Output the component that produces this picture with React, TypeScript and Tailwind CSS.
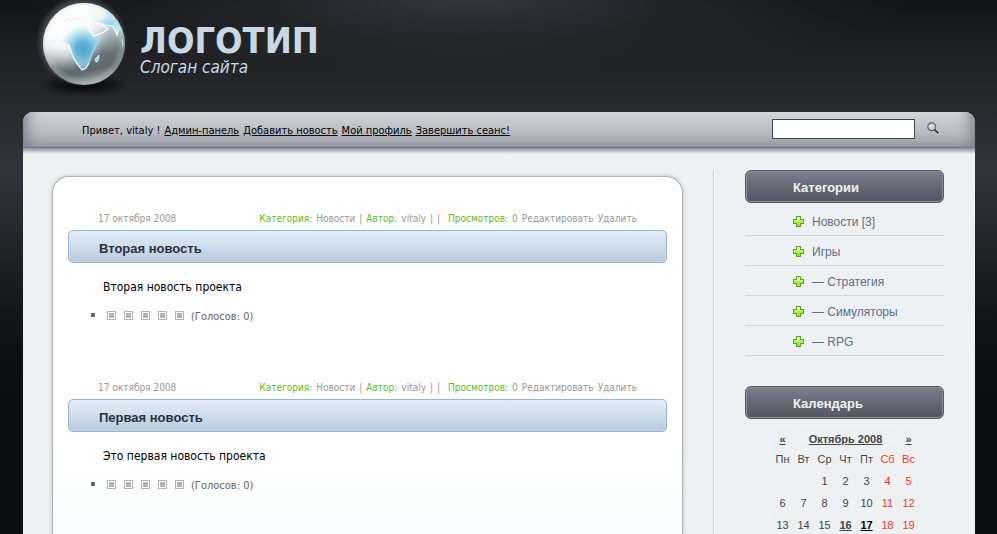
import React from "react";

const categories = ["Новости [3]", "Игры", "— Стратегия", "— Симуляторы", "— RPG"];

const news = [
  { title: "Вторая новость", text: "Вторая новость проекта" },
  { title: "Первая новость", text: "Это первая новость проекта" },
];

const weekdays = ["Пн", "Вт", "Ср", "Чт", "Пт", "Сб", "Вс"];
const weeks = [
  ["", "", "1", "2", "3", "4", "5"],
  ["6", "7", "8", "9", "10", "11", "12"],
  ["13", "14", "15", "16", "17", "18", "19"],
];

const tahoma = "font-['DejaVu_Sans_Condensed','DejaVu_Sans',sans-serif]";

function Globe() {
  return (
    <svg className="-mr-1 h-[98px] w-[108px] shrink-0" viewBox="0 0 108 98" aria-hidden="true">
      <defs>
        <linearGradient id="ball" x1="0.3" y1="0" x2="0.55" y2="1">
          <stop offset="0" stopColor="#ffffff" />
          <stop offset="0.3" stopColor="#e3ebef" />
          <stop offset="0.5" stopColor="#a3b0b7" />
          <stop offset="0.7" stopColor="#667177" />
          <stop offset="0.84" stopColor="#5f6a6f" />
          <stop offset="1" stopColor="#9aa3a6" />
        </linearGradient>
        <radialGradient id="shine" cx="0.26" cy="0.28" r="0.55">
          <stop offset="0" stopColor="#fff" />
          <stop offset="0.5" stopColor="#fff" stopOpacity="0.85" />
          <stop offset="1" stopColor="#fff" stopOpacity="0" />
        </radialGradient>
        <radialGradient id="rim" cx="0.5" cy="0.5" r="0.5">
          <stop offset="0.8" stopColor="#fff" stopOpacity="0" />
          <stop offset="0.95" stopColor="#e3e9eb" stopOpacity="0.25" />
          <stop offset="1" stopColor="#a6afb3" stopOpacity="0.3" />
        </radialGradient>
        <radialGradient id="halo">
          <stop offset="0.85" stopColor="#a5b0b6" stopOpacity="0.3" />
          <stop offset="1" stopColor="#8c979e" stopOpacity="0" />
        </radialGradient>
        <radialGradient id="drop">
          <stop offset="0" stopColor="#000" stopOpacity="0.9" />
          <stop offset="0.6" stopColor="#000" stopOpacity="0.4" />
          <stop offset="1" stopColor="#000" stopOpacity="0" />
        </radialGradient>
        <radialGradient id="land" gradientUnits="userSpaceOnUse" cx="47" cy="49" r="26">
          <stop offset="0" stopColor="#4da3cb" />
          <stop offset="0.3" stopColor="#66b4d7" />
          <stop offset="0.65" stopColor="#a5dbee" stopOpacity="0.7" />
          <stop offset="1" stopColor="#ffffff" stopOpacity="0" />
        </radialGradient>
        <linearGradient id="asia" x1="0" y1="0" x2="1" y2="1">
          <stop offset="0" stopColor="#e5f7fc" stopOpacity="0.1" />
          <stop offset="0.6" stopColor="#8fd2ea" />
          <stop offset="1" stopColor="#c5f4ff" />
        </linearGradient>
      </defs>
      <ellipse cx="48" cy="85" rx="46" ry="12" fill="url(#drop)" />
      <circle cx="46" cy="41" r="46" fill="url(#halo)" />
      <circle cx="48" cy="44" r="41" fill="url(#ball)" />
      <circle cx="48" cy="44" r="41" fill="url(#shine)" />
      <path d="M58 23 L66 22 L70 25 L77 26 L81 35 L83 28 L86 33 Q82 17 69 10 Q72 18 66 20Z" fill="url(#asia)" />
      <path
        d="M20 43 L24 33 L33 26 L49 24 L53 30 L58 36 L63 38 L62 43 L57 51 L55 57 L53 63 L50 68 L46 70 L42 65 L38 59 L35 51 L33 45 L27 43 L23 46Z"
        fill="url(#land)"
      />
      <path d="M20 42 L22 45 L27 43 L33 45 L35 51 L38 59 L42 65 L46 70 L50 68 L53 63" fill="none" stroke="#f0fdff" strokeWidth="1.2" />
      <path d="M53 63 L55 57 L57 51 L62 43 L63 38 L58 36" fill="none" stroke="#8fe0f7" strokeWidth="1.2" />
      <path d="M50 23 L54 30 L58 36 L66 33 L72 29 L68 26 L62 26 L60 23 L68 25 L77 26 L81 35 L83 28" fill="none" stroke="#fbffff" strokeWidth="1.2" />
      <path d="M72 12 Q80 20 83 30 M86 39 L87 46" fill="none" stroke="#a9ebfb" strokeWidth="1.2" />
      <path d="M60 62 L59 59 L63 55 L63 58 L61 62Z" fill="#8cd9ef" stroke="#e4fcff" strokeWidth="0.8" />
      <path d="M28 22 L32 19 L35 21 L39 18 L42 20 L46 18 L49 20 M45 23 L50 21" fill="none" stroke="#dde9ee" strokeWidth="0.8" />
      <circle cx="48" cy="44" r="41" fill="url(#rim)" />
    </svg>
  );
}

function Plus() {
  return (
    <svg className="h-[11px] w-[11px] shrink-0" viewBox="0 0 11 11" aria-hidden="true" shapeRendering="crispEdges">
      <defs>
        <linearGradient id="plus" x1="0" y1="0" x2="0" y2="1">
          <stop offset="0.3" stopColor="#e6f9bb" />
          <stop offset="0.5" stopColor="#b5ee55" />
          <stop offset="1" stopColor="#92e02d" />
        </linearGradient>
      </defs>
      <path d="M3.5 .5H7.5V3.5H10.5V7.5H7.5V10.5H3.5V7.5H.5V3.5H3.5Z" fill="url(#plus)" stroke="#5ba329" />
    </svg>
  );
}

function SideTitle({ children }: { children: React.ReactNode }) {
  return (
    <h2 className="h-[33px] rounded-md border border-[#555861] bg-linear-to-b from-[#79808d] to-[#535560] pl-[47px] text-[13px] leading-[33px] font-bold text-[#f0f3f6] shadow-[inset_0_0_0_1px_#8f929c]">
      {children}
    </h2>
  );
}

function Article({ title, text }: { title: string; text: string }) {
  return (
    <article className="h-[169px]">
      <div className={`flex justify-between px-[30px] text-[10px] leading-[12px] text-[#999] ${tahoma}`}>
        <span>17 октября 2008</span>
        <span className="flex gap-1">
          <span className="text-[#66bb22]">Категория:</span>
          <a href="#news">Новости</a>
          <span>|</span>
          <span className="text-[#66bb22]">Автор:</span>
          <a href="#vitaly">vitaly</a>
          <span>|</span>
          <span className="mr-1">|</span>
          <span className="text-[#66bb22]">Просмотров:</span>
          <span>0</span>
          <a href="#edit">Редактировать</a>
          <a href="#delete">Удалить</a>
        </span>
      </div>
      <h2 className="mt-[5px] h-[33px] rounded-[5px] border border-[#98b4d2] bg-linear-to-b from-[#e4eef8] to-[#b9cbde] pl-[30px] text-[13px] leading-[35px] font-bold text-[#2c3040] shadow-[inset_0_0_2px_#dbe7f2]">
        {title}
      </h2>
      <p className={`mt-4 pl-[35px] text-xs leading-4 text-black ${tahoma}`}>{text}</p>
      <ul className="mt-[10px] pl-[23px]">
        <li className="flex h-5 items-center">
          <span className="mr-3 size-1 bg-[#666]" />
          <span className="flex gap-2">
            {[1, 2, 3, 4, 5].map((n) => (
              <button key={n} type="button" aria-label={`Оценка ${n}`} className="size-[9px] border border-[#b3b3b3] bg-[#b3b3b3] shadow-[inset_0_0_0_1px_#fff]" />
            ))}
          </span>
          <span className={`mt-1 ml-[7px] text-[11px] leading-4 text-[#666] ${tahoma}`}>(Голосов: 0)</span>
        </li>
      </ul>
    </article>
  );
}

function Calendar() {
  const cell = "border border-[#eeeeee] p-0 text-center";
  return (
    <table className="mt-[10px] ml-[26px] border-separate border-spacing-[2px] text-[11px] leading-[15px] text-[#444]">
      <thead>
        <tr className="h-[17px]">
          <th className={cell}><a href="#prev" className="underline">«</a></th>
          <th className={cell} colSpan={5}><a href="#month" className="underline">Октябрь 2008</a></th>
          <th className={cell}><a href="#next" className="underline">»</a></th>
        </tr>
        <tr className="h-[19px]">
          {weekdays.map((d, i) => (
            <th key={d} className={`w-[19px] font-normal ${cell} ${i > 4 ? "text-[#ff3311]" : ""}`}>{d}</th>
          ))}
        </tr>
      </thead>
      <tbody>
        {weeks.map((week, w) => (
          <tr key={w} className="h-5">
            {week.map((d, i) => (
              <td key={i} className={`${d ? cell : ""} ${i > 4 ? "text-[#ff3311]" : ""}`}>
                {d === "16" || d === "17" ? (
                  <a href={`#day-${d}`} className={`font-bold underline ${d === "17" ? "text-black" : ""}`}>{d}</a>
                ) : (
                  d
                )}
              </td>
            ))}
          </tr>
        ))}
      </tbody>
    </table>
  );
}

export default function App() {
  return (
    <div className="h-screen overflow-hidden bg-[radial-gradient(ellipse_440px_80px_at_47%_0,#32383c_0%,#2c303480_50%,#28292d00_100%),linear-gradient(to_bottom,#131416_0px,#1f2023_50px,#292a2e_108px,#2b2d32_125px,#31343d_168px,#2c2e35_205px,#222327_250px,#17181a_300px,#0f1011_350px,#0c0d0f_400px)] pr-[22px] pl-[23px] font-['Liberation_Sans',Arial,sans-serif]">
      <header className="flex h-28 items-start pl-[13px]">
        <Globe />
        <div className={`pt-[23px] text-[#c9d8e4] ${tahoma}`}>
          <h1 className="text-[36px] leading-[36px] font-bold">ЛОГОТИП</h1>
          <p className="text-[17px] leading-4 italic">Слоган сайта</p>
        </div>
      </header>

      <div className="min-h-[calc(100vh-112px)] rounded-t-[10px] bg-[#edf1f3]">
        <nav className="flex h-9 items-center justify-between rounded-t-[10px] border-b border-[#747986] bg-linear-to-b from-[#d2d5da] to-[#a5a8b1] pl-[59px] shadow-[inset_14px_-6px_14px_-10px_#777e8b,inset_-14px_-6px_14px_-10px_#777e8b]">
          <div className={`flex gap-1 pt-[3px] text-[11px] text-black ${tahoma}`}>
            <span>Привет, vitaly !</span>
            <a href="#admin" className="underline">Админ-панель</a>
            <a href="#add" className="underline">Добавить новость</a>
            <a href="#profile" className="underline">Мой профиль</a>
            <a href="#logout" className="underline">Завершить сеанс!</a>
          </div>
          <form className="mr-[29px] flex items-center gap-[9px] pb-[2px]">
            <input type="text" aria-label="Поиск" className="h-5 w-[143px] border border-[#444] bg-white px-1" />
            <button type="button" aria-label="Найти" className="flex h-5 w-[22px] items-center pl-[3px]">
              <svg className="size-[13px]" viewBox="0 0 13 13" aria-hidden="true">
                <path d="M8 8L12 12" stroke="#f0f1f3" strokeWidth="3" />
                <circle cx="4.7" cy="4.7" r="3.9" fill="#c5d2d8" stroke="#596069" strokeWidth="1.2" />
                <path d="M3 5Q3 3 5 3" fill="none" stroke="#fff" />
                <path d="M7.5 7.5L11.5 11.5" stroke="#3d4248" strokeWidth="2" />
              </svg>
            </button>
          </form>
        </nav>
        <div className="h-[6px] bg-linear-to-b from-[#8b909a] to-[#edf1f3]" />

        <div className="flex pt-4 pr-[31px] pl-[30px]">
          <main className="mt-[7px] min-w-0 flex-1 rounded-t-[16px] bg-[linear-gradient(to_bottom,#fefefe_280px,#fafbfc_358px)] px-[15px] pt-9 shadow-[0_0_0_1px_#aeb3b8,0_0_5px_#a0a6ac]">
            {news.map((n) => (
              <Article key={n.title} title={n.title} text={n.text} />
            ))}
          </main>
          <aside className="ml-[31px] w-[231px] shrink-0 border-l border-[#cdcfd1] pl-[31px] shadow-[inset_1px_0_#fff]">
            <SideTitle>Категории</SideTitle>
            <ul className="mb-[30px] pt-[3px]">
              {categories.map((c) => (
                <li key={c} className="flex h-[30px] items-center gap-2 border-b border-[#d0d5d9] pt-[2px] pl-[48px] text-xs text-[#5f6f84]">
                  <Plus />
                  <a href="#category">{c}</a>
                </li>
              ))}
            </ul>
            <SideTitle>Календарь</SideTitle>
            <Calendar />
          </aside>
        </div>
      </div>
    </div>
  );
}
